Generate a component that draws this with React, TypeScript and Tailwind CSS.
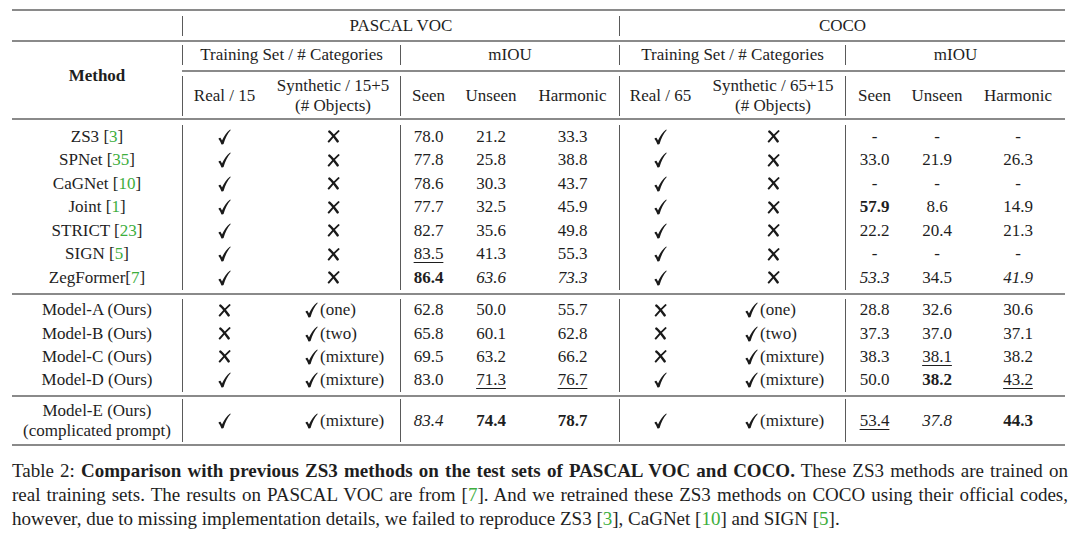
import React from 'react';

type Cell = string;

const COLS =
  'grid grid-cols-[170px_84px_134px_56px_70px_93px_82px_144px_58px_68px_94px]';

// columns that carry a vertical rule on their left edge
const RULED = [1, 3, 6, 8];

function Check() {
  return (
    <svg width="13" height="16" viewBox="0 0 14 17" className="inline-block" aria-hidden>
      <path
        d="M0.4 10.4 C1.2 9.6 1.9 9.2 2.6 9.3 C3.2 9.9 3.7 11 4.3 12.3 C6.3 7.6 9.2 3.3 13.1 0.3 L13.7 1 C10.4 4.6 7.9 9.8 6 16.1 C5.4 16.6 4.2 16.7 3.6 16.3 C2.8 14 1.8 11.9 0.4 10.4 Z"
        fill="#1a1a1a"
      />
    </svg>
  );
}

function Cross() {
  return (
    <svg width="13" height="13" viewBox="0 0 14 14" className="inline-block" aria-hidden>
      <path d="M2.6 1.8 C5.4 4.2 8.4 8 11.4 12.2" stroke="#1a1a1a" strokeWidth="2.7" strokeLinecap="round" fill="none" />
      <path d="M12.4 1.2 C9 4.2 5.4 8 1.8 12.4" stroke="#1a1a1a" strokeWidth="2.1" strokeLinecap="round" fill="none" />
    </svg>
  );
}

function Cite({ n }: { n: string }) {
  return (
    <>
      [<span className="text-[#3dae3d]">{n}</span>]
    </>
  );
}

function Value({ v }: { v: Cell }) {
  if (v === 'Y') return <Check />;
  if (v === 'N') return <Cross />;
  if (v.startsWith('Y(')) {
    return (
      <span className="flex items-center gap-[2px]">
        <Check />
        <span>{v.slice(1)}</span>
      </span>
    );
  }
  if (v.startsWith('b:')) return <span className="font-bold">{v.slice(2)}</span>;
  if (v.startsWith('i:')) return <span className="italic">{v.slice(2)}</span>;
  if (v.startsWith('u:'))
    return <span className="underline decoration-1 underline-offset-[3px]">{v.slice(2)}</span>;
  return <span>{v}</span>;
}

const BASELINES: { name: string; cite: string; cells: Cell[] }[] = [
  { name: 'ZS3 ', cite: '3', cells: ['Y', 'N', '78.0', '21.2', '33.3', 'Y', 'N', '-', '-', '-'] },
  { name: 'SPNet ', cite: '35', cells: ['Y', 'N', '77.8', '25.8', '38.8', 'Y', 'N', '33.0', '21.9', '26.3'] },
  { name: 'CaGNet ', cite: '10', cells: ['Y', 'N', '78.6', '30.3', '43.7', 'Y', 'N', '-', '-', '-'] },
  { name: 'Joint ', cite: '1', cells: ['Y', 'N', '77.7', '32.5', '45.9', 'Y', 'N', 'b:57.9', '8.6', '14.9'] },
  { name: 'STRICT ', cite: '23', cells: ['Y', 'N', '82.7', '35.6', '49.8', 'Y', 'N', '22.2', '20.4', '21.3'] },
  { name: 'SIGN ', cite: '5', cells: ['Y', 'N', 'u:83.5', '41.3', '55.3', 'Y', 'N', '-', '-', '-'] },
  { name: 'ZegFormer', cite: '7', cells: ['Y', 'N', 'b:86.4', 'i:63.6', 'i:73.3', 'Y', 'N', 'i:53.3', '34.5', 'i:41.9'] },
];

const OURS: { name: string; cells: Cell[] }[] = [
  { name: 'Model-A (Ours)', cells: ['N', 'Y(one)', '62.8', '50.0', '55.7', 'N', 'Y(one)', '28.8', '32.6', '30.6'] },
  { name: 'Model-B (Ours)', cells: ['N', 'Y(two)', '65.8', '60.1', '62.8', 'N', 'Y(two)', '37.3', '37.0', '37.1'] },
  { name: 'Model-C (Ours)', cells: ['N', 'Y(mixture)', '69.5', '63.2', '66.2', 'N', 'Y(mixture)', '38.3', 'u:38.1', '38.2'] },
  { name: 'Model-D (Ours)', cells: ['Y', 'Y(mixture)', '83.0', 'u:71.3', 'u:76.7', 'Y', 'Y(mixture)', '50.0', 'b:38.2', 'u:43.2'] },
];

const MODEL_E: Cell[] = ['Y', 'Y(mixture)', 'i:83.4', 'b:74.4', 'b:78.7', 'Y', 'Y(mixture)', 'u:53.4', 'i:37.8', 'b:44.3'];

function cellClass(col: number, v: Cell) {
  const rule = RULED.includes(col + 1) ? 'border-l border-[#5a5a5a]' : '';
  const left = v.startsWith('Y(');
  const pad = left ? (col === 1 ? 'justify-start pl-[39px]' : 'justify-start pl-[44px]') : 'justify-center';
  return `flex items-center ${pad} ${rule}`;
}

function DataRow({ label, cells, height }: { label: React.ReactNode; cells: Cell[]; height: string }) {
  return (
    <div className={`${COLS} ${height}`}>
      <div className="flex flex-col items-center justify-center leading-[20px]">{label}</div>
      {cells.map((v, i) => (
        <div key={i} className={cellClass(i, v)}>
          <Value v={v} />
        </div>
      ))}
    </div>
  );
}

function Rule({ className = '' }: { className?: string }) {
  return <div className={`h-[2px] bg-[#8a8a8a] ${className}`} />;
}

function HeadCell({ children, ruled = true, className = 'pt-[4px] pb-[5px]' }: { children?: React.ReactNode; ruled?: boolean; className?: string }) {
  return (
    <div className={className}>
      <div className={`flex h-full flex-col items-center justify-center ${ruled ? 'border-l border-[#5a5a5a]' : ''}`}>
        {children}
      </div>
    </div>
  );
}

export default function App() {
  return (
    <div className="h-[535px] w-[1080px] overflow-hidden bg-white font-['Liberation_Serif','Times_New_Roman',serif] text-[#1e1e1e]">
      <div className="w-[1053px] pl-[12px] pt-[9px] text-[17px] leading-[20px] box-content">
        <Rule />
        {/* dataset row */}
        <div className="grid h-[29px] grid-cols-[170px_437px_446px]">
          <div />
          <HeadCell className="pt-[5px] pb-[7px]">PASCAL VOC</HeadCell>
          <HeadCell className="pt-[5px] pb-[7px]">COCO</HeadCell>
        </div>
        <Rule />
        <div className="flex">
          <div className="flex w-[170px] items-center justify-center pb-[8px] font-bold">Method</div>
          <div className="w-[883px]">
            <div className="grid h-[28px] grid-cols-[218px_219px_226px_220px]">
              <HeadCell className="pt-[3px] pb-[6px]">Training Set / # Categories</HeadCell>
              <HeadCell className="pt-[3px] pb-[6px]">mIOU</HeadCell>
              <HeadCell className="pt-[3px] pb-[6px]">Training Set / # Categories</HeadCell>
              <HeadCell className="pt-[3px] pb-[6px]">mIOU</HeadCell>
            </div>
            <Rule />
            <div className="grid h-[46px] grid-cols-[84px_134px_56px_70px_93px_82px_144px_58px_68px_94px]">
              <HeadCell>Real / 15</HeadCell>
              <HeadCell ruled={false}>
                <span>Synthetic / 15+5</span>
                <span>(# Objects)</span>
              </HeadCell>
              <HeadCell>Seen</HeadCell>
              <HeadCell ruled={false}>Unseen</HeadCell>
              <HeadCell ruled={false}>Harmonic</HeadCell>
              <HeadCell>Real / 65</HeadCell>
              <HeadCell ruled={false}>
                <span>Synthetic / 65+15</span>
                <span>(# Objects)</span>
              </HeadCell>
              <HeadCell>Seen</HeadCell>
              <HeadCell ruled={false}>Unseen</HeadCell>
              <HeadCell ruled={false}>Harmonic</HeadCell>
            </div>
          </div>
        </div>
        <Rule />

        {/* previous methods */}
        <div className="pb-[3px] pt-[5px]">
          {BASELINES.map((r) => (
            <DataRow
              key={r.name}
              height="h-[23.5px]"
              label={
                <span>
                  {r.name}
                  <Cite n={r.cite} />
                </span>
              }
              cells={r.cells}
            />
          ))}
        </div>
        <Rule />

        {/* ours */}
        <div className="pb-[3px] pt-[4px]">
          {OURS.map((r) => (
            <DataRow key={r.name} height="h-[23.4px]" label={<span>{r.name}</span>} cells={r.cells} />
          ))}
        </div>
        <Rule />

        <div className="pb-[2px] pt-[2px]">
          <DataRow
            height="h-[43px]"
            label={
              <>
                <span>Model-E (Ours)</span>
                <span>(complicated prompt)</span>
              </>
            }
            cells={MODEL_E}
          />
        </div>
        <Rule />
      </div>

      <p className="mt-[13px] w-[1068px] pl-[12px] text-justify text-[19px] leading-[24px] box-border">
        Table 2: <span className="font-bold">Comparison with previous ZS3 methods on the test sets of PASCAL VOC and COCO.</span>{' '}
        These ZS3 methods are trained on real training sets. The results on PASCAL VOC are from <Cite n="7" />. And we
        retrained these ZS3 methods on COCO using their official codes, however, due to missing implementation details,
        we failed to reproduce ZS3 <Cite n="3" />, CaGNet <Cite n="10" /> and SIGN <Cite n="5" />.
      </p>
    </div>
  );
}
